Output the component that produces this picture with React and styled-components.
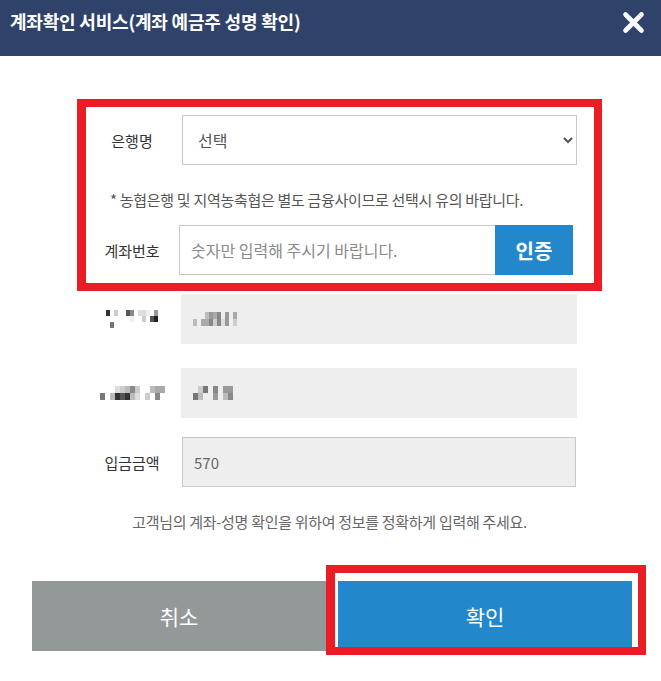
import React from "react";
import styled, { createGlobalStyle } from "styled-components";

const GlobalStyle = createGlobalStyle`
  html, body { margin: 0; padding: 0; background: #fff; }
  body { font-family: "Noto Sans CJK KR", "Noto Sans", sans-serif; }
  * { box-sizing: border-box; }
`;

const Modal = styled.div`
  width: 661px;
  height: 681px;
  background: #fff;
  overflow: hidden;
`;

const Header = styled.header`
  height: 56px;
  background: #2f4269;
  display: flex;
  justify-content: space-between;
  align-items: flex-start;
  padding: 10px 16px 0 10px;
`;

const Title = styled.h1`
  margin: 0;
  color: #fff;
  font-size: 18px;
  font-weight: 700;
  line-height: 22px;
  letter-spacing: -0.2px;
`;

const CloseButton = styled.button`
  border: 0;
  background: none;
  padding: 0;
  margin-top: 1px;
  width: 23px;
  height: 23px;
  cursor: pointer;
  display: flex;
`;

const Body = styled.div`
  padding: 59px 84px 0 82px;
`;

const Highlight = styled.section`
  position: relative;
`;

const RedFrame = styled.div`
  position: absolute;
  top: ${(p) => p.$top}px;
  bottom: ${(p) => p.$bottom}px;
  left: ${(p) => p.$left}px;
  right: ${(p) => p.$right}px;
  border: 8px solid #ec1c24;
  border-left-width: 9px;
  pointer-events: none;
`;

const Row = styled.div`
  display: grid;
  grid-template-columns: 100px 1fr;
  align-items: center;
  margin-top: ${(p) => p.$mt || 0}px;
`;

const Label = styled.label`
  text-align: center;
  font-size: 15px;
  color: #333;
  display: flex;
  justify-content: center;
`;

const Select = styled.select`
  height: 50px;
  width: 100%;
  border: 1px solid #c9c9c9;
  background: #fff;
  color: #555;
  font-family: inherit;
  font-size: 16px;
  padding: 0 8px 0 11px;
  border-radius: 0;
  outline: none;
`;

const Note = styled.p`
  margin: 25px 0 0;
  padding-left: 28px;
  font-size: 15px;
  line-height: 20px;
  color: #555;
  letter-spacing: -0.3px;
`;

const AccountGroup = styled.div`
  display: flex;
  height: 50px;
  margin-left: -3px;
  margin-right: 4px;
`;

const TextInput = styled.input`
  flex: 1;
  min-width: 0;
  height: 50px;
  border: 1px solid #c9c9c9;
  border-right: 0;
  padding: 0 11px;
  font-family: inherit;
  font-size: 16px;
  color: #333;
  outline: none;
  &::placeholder { color: #8a8a8a; }
`;

const VerifyButton = styled.button`
  width: 78px;
  border: 0;
  background: #2388cb;
  color: #fff;
  font-family: inherit;
  font-size: 20px;
  font-weight: 700;
  cursor: pointer;
`;

const Field = styled.div`
  height: 50px;
  background: #eeeeee;
  border: ${(p) => (p.$bordered ? "1px solid #c9c9c9" : "0")};
  display: flex;
  align-items: center;
  padding-left: ${(p) => (p.$bordered ? 11 : 12)}px;
  font-size: 15px;
  color: #666;
  margin-left: ${(p) => (p.$bordered ? 0 : -1)}px;
  margin-right: ${(p) => (p.$bordered ? 1 : 0)}px;
`;

const MosaicGrid = styled.div`
  display: grid;
  grid-template-columns: repeat(${(p) => p.$cols}, ${(p) => p.$cw}px);
  grid-auto-rows: ${(p) => p.$ch}px;
`;

const Cell = styled.span`
  background: ${(p) => p.$c};
`;

const Info = styled.p`
  margin: 25px 0 0;
  text-align: center;
  font-size: 15px;
  line-height: 20px;
  color: #666;
  letter-spacing: -0.3px;
  padding-right: 2px;
`;

const ButtonRow = styled.div`
  display: flex;
  gap: 12px;
  margin: 49px 29px 0 32px;
`;

const ButtonSlot = styled.div`
  position: relative;
  flex: 1;
  display: flex;
`;

const ActionButton = styled.button`
  flex: 1;
  height: 70px;
  border: 0;
  background: ${(p) => (p.$primary ? "#2388cb" : "#939899")};
  color: #fff;
  font-family: inherit;
  font-size: 21px;
  font-weight: 400;
  cursor: pointer;
`;

const W = "transparent";

const Mosaic = ({ cells, cols, cw = 4, ch = 6 }) => (
  <MosaicGrid $cols={cols} $cw={cw} $ch={ch}>
    {cells.map((c, i) => (
      <Cell key={i} $c={c || W} />
    ))}
  </MosaicGrid>
);

const label1 = [
  "#333", null, "#ccc", null, null, "#555", "#888", null, "#ddd", "#ddd", "#eee", null, "#999",
  null, null, null, null, null, null, "#eee", null, null, "#ccc", null, "#555", "#222",
  null, "#777", null, null, null, null, null, null, null, null, null, null, null,
];
const value1 = [
  null, null, null, "#bbb", "#999", "#aaa", "#888", null, "#999", null, "#aaa",
  "#bbb", null, "#aaa", "#aaa", "#888", "#ccc", "#888", "#ddd", "#999", null, "#ccc",
];
const label2 = [
  null, null, null, "#ddd", "#ccc", "#bbb", "#888", "#ccc", null, null, "#bbb", "#aaa", "#aaa",
  "#777", null, "#bbb", "#333", "#555", "#333", "#bbb", "#ddd", null, "#ccc", null, "#888", null,
];
const value2 = [
  null, "#ccc", "#777", null, "#888", null, "#999", "#999",
  "#777", "#bbb", null, null, "#999", null, "#bbb", "#888",
];

export default function App() {
  return (
    <>
      <GlobalStyle />
      <Modal>
        <Header>
          <Title>계좌확인 서비스(계좌 예금주 성명 확인)</Title>
          <CloseButton aria-label="닫기">
            <svg width="23" height="23" viewBox="0 0 23 23">
              <path
                d="M3.5 3.5 L19.5 19.5 M19.5 3.5 L3.5 19.5"
                stroke="#fff"
                strokeWidth="4.6"
                strokeLinecap="round"
                fill="none"
              />
            </svg>
          </CloseButton>
        </Header>
        <Body>
          <Highlight>
            <RedFrame $top={-16} $bottom={-16} $left={-5} $right={-25} />
            <Row>
              <Label>은행명</Label>
              <Select defaultValue="">
                <option value="">선택</option>
              </Select>
            </Row>
            <Note>* 농협은행 및 지역농축협은 별도 금융사이므로 선택시 유의 바랍니다.</Note>
            <Row $mt={15}>
              <Label>계좌번호</Label>
              <AccountGroup>
                <TextInput placeholder="숫자만 입력해 주시기 바랍니다." />
                <VerifyButton>인증</VerifyButton>
              </AccountGroup>
            </Row>
          </Highlight>
          <Row $mt={19}>
            <Label>
              <Mosaic cells={label1} cols={13} />
            </Label>
            <Field>
              <Mosaic cells={value1} cols={11} ch={7} />
            </Field>
          </Row>
          <Row $mt={24}>
            <Label>
              <Mosaic cells={label2} cols={13} cw={5} ch={7} />
            </Label>
            <Field>
              <Mosaic cells={value2} cols={8} cw={5} ch={7} />
            </Field>
          </Row>
          <Row $mt={19}>
            <Label>입금금액</Label>
            <Field $bordered>570</Field>
          </Row>
        </Body>
        <Info>고객님의 계좌-성명 확인을 위하여 정보를 정확하게 입력해 주세요.</Info>
        <ButtonRow>
          <ButtonSlot>
            <ActionButton>취소</ActionButton>
          </ButtonSlot>
          <ButtonSlot>
            <ActionButton $primary>확인</ActionButton>
            <RedFrame $top={-16} $bottom={-4} $left={-12} $right={-14} />
          </ButtonSlot>
        </ButtonRow>
      </Modal>
    </>
  );
}
